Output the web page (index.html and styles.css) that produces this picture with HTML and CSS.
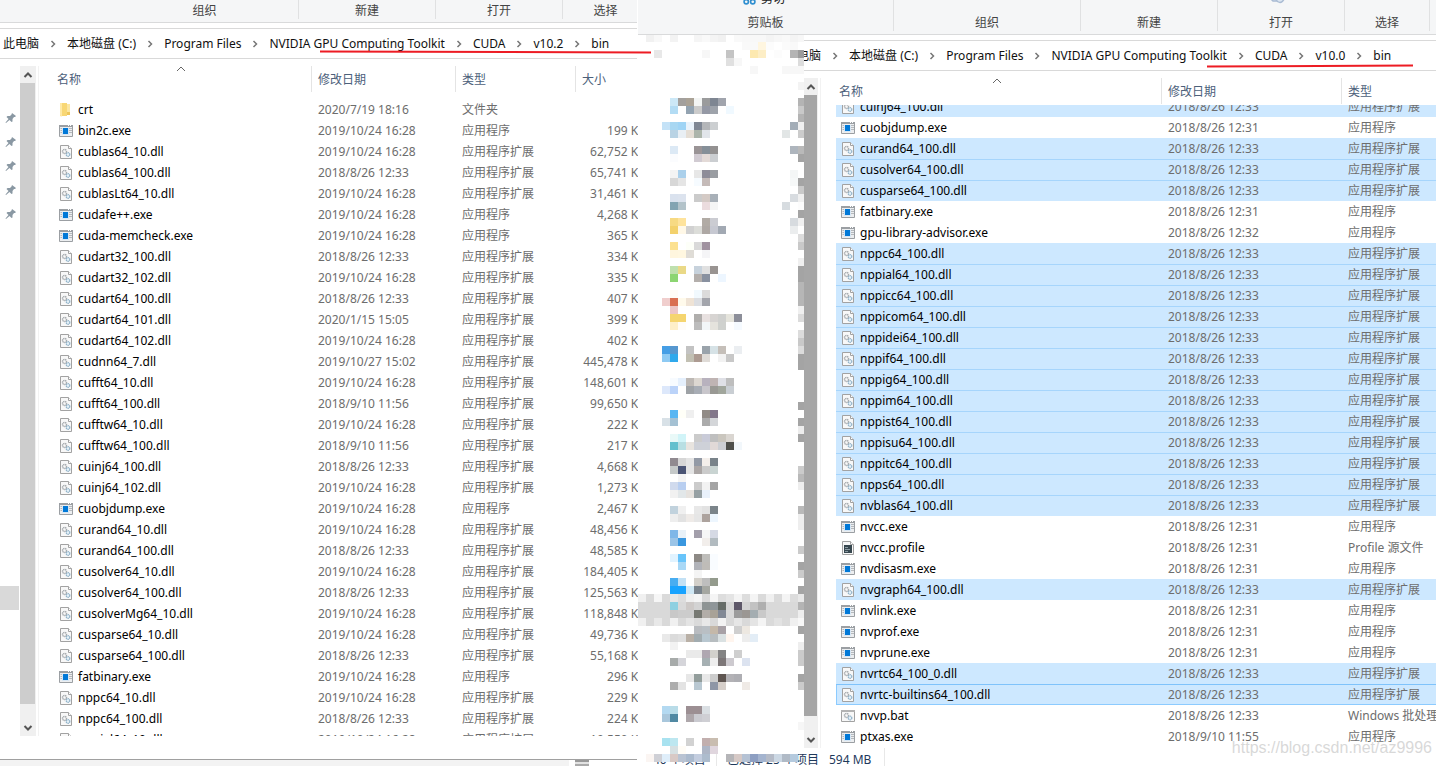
FILE: index.html
```html
<!DOCTYPE html>
<html lang="zh-CN">
<head>
<meta charset="utf-8">
<title>bin</title>
<link rel="stylesheet" href="styles.css">
</head>
<body>
<svg class="sprite" aria-hidden="true">
  <symbol id="i-folder" viewBox="0 0 16 16"><path d="M2 1h7v13H2z" fill="#f8d775"/><path d="M9 2h3v11H9z" fill="#fbe6a2"/><path d="M2 1h2v13l-1 1-1-2z" fill="#ffe9a6"/><path d="M9 10h3v3H9z" fill="#eec65c"/></symbol>
  <symbol id="i-exe" viewBox="0 0 16 16"><path d="M1.500 2.500h13v11h-13z" fill="#eceef0" stroke="#9b9fa3"/><path d="M1 2h14v2H1z" fill="#9b9fa3"/><path d="M10 2h1v1h-1zM12 2h1v1h-1z" fill="#fff"/><path d="M2.500 5.500h3M2.500 7.500h3M2.500 9.500h3M11 5.500h3M11 7.500h3M11 9.500h3" stroke="#b5b9bd"/><path d="M4 5h7v7H4z" fill="#d5e6f5"/><path d="M5 5h5v6H5z" fill="#0078d7"/></symbol>
  <symbol id="i-dll" viewBox="0 0 16 16"><path d="M2.500 1.500h8l3 3v10h-11z" fill="#f8f8f8" stroke="#a2a2a2"/><path d="M10.500 1.500v3h3" fill="#fff" stroke="#a2a2a2"/><circle cx="6.500" cy="7.500" r="2" fill="none" stroke="#a5a9ad" stroke-width="1.500" stroke-dasharray="1.300 .5"/><circle cx="10" cy="10.500" r="1.800" fill="#e6f1f8" stroke="#93b4ca" stroke-width="1.300" stroke-dasharray="1.300 .5"/></symbol>
  <symbol id="i-bat" viewBox="0 0 16 16"><path d="M1.500 2.500h13v11h-13z" fill="#f8f8f8" stroke="#a2a2a2"/><path d="M1 2h14v2H1z" fill="#b3b3b3"/><circle cx="6.500" cy="7.500" r="2" fill="none" stroke="#a5a9ad" stroke-width="1.500" stroke-dasharray="1.300 .5"/><circle cx="10" cy="10" r="1.800" fill="#e6f1f8" stroke="#93b4ca" stroke-width="1.300" stroke-dasharray="1.300 .5"/></symbol>
  <symbol id="i-profile" viewBox="0 0 16 16"><path d="M2.500 1.500h8l3 3v10h-11z" fill="#f8f8f8" stroke="#a2a2a2"/><path d="M10.500 1.500v3h3" fill="#fff" stroke="#a2a2a2"/><path d="M4 5h8v8H4z" fill="#37474f"/><path d="M5 7.500h3M5 9.500h5M5 11.500h3" stroke="#9fb0b8" stroke-width=".8"/></symbol>
  <symbol id="i-pin" viewBox="0 0 12 12"><path d="M7 1l4 3-1 1-1 0-1.500 2v2.500l-1 .5-2-2L1 11l-.5-.5L3.500 7l-2-2 1-1h2.500L6.500 2.500z" fill="#8a98a3"/></symbol>
  <symbol id="i-next" viewBox="0 0 6 8"><path d="M1.500 1l3 3-3 3" fill="none" stroke="#777" stroke-width="1.500"/></symbol>
  <symbol id="i-up" viewBox="0 0 10 8"><path d="M1.500 6L5 2.500 8.500 6" fill="none" stroke="#555" stroke-width="2"/></symbol>
  <symbol id="i-down" viewBox="0 0 10 8"><path d="M1.500 2L5 5.500 8.500 2" fill="none" stroke="#555" stroke-width="2"/></symbol>
  <symbol id="i-sort" viewBox="0 0 10 6"><path d="M1 5l4-4 4 4" fill="none" stroke="#666"/></symbol>
</svg>
<main class="desktop">
  <section class="window window-left" aria-label="v10.2">
    <header class="ribbon">
      <div class="group g-clip"></div>
      <div class="group g-org">组织</div>
      <div class="group g-new">新建</div>
      <div class="group g-open">打开</div>
      <div class="group g-select">选择</div>
    </header>
    <nav class="address" data-path="此电脑|本地磁盘 (C:)|Program Files|NVIDIA GPU Computing Toolkit|CUDA|v10.2|bin"></nav>
    <svg class="mark" viewBox="0 0 332 4" aria-hidden="true"><path d="M0 1.500L331 2.500" stroke="#ed1c24" stroke-width="2"/></svg>
    <div class="body">
      <aside class="nav">
        <svg class="pin"><use href="#i-pin"/></svg>
        <svg class="pin"><use href="#i-pin"/></svg>
        <svg class="pin"><use href="#i-pin"/></svg>
        <svg class="pin"><use href="#i-pin"/></svg>
        <svg class="pin"><use href="#i-pin"/></svg>
        <div class="nav-current"></div>
      </aside>
      <div class="scrollbar">
        <button type="button" class="sb-up" aria-label="向上"><svg><use href="#i-up"/></svg></button>
        <div class="thumb"></div>
        <button type="button" class="sb-down" aria-label="向下"><svg><use href="#i-down"/></svg></button>
      </div>
      <div class="files">
        <div class="heads">
          <button type="button" class="h-name">名称<svg class="sort"><use href="#i-sort"/></svg></button>
          <button type="button" class="h-date">修改日期</button>
          <button type="button" class="h-type">类型</button>
          <button type="button" class="h-size">大小</button>
        </div>
        <div class="view"><table id="left-files"></table></div>
      </div>
    </div>
    <footer class="hscroll"><div class="hthumb"></div><span class="grip"></span></footer>
  </section>

  <section class="window window-right" aria-label="v10.0">
    <header class="ribbon">
      <div class="group g-clip">剪贴板
        <span class="cut"><svg viewBox="0 0 12 12"><circle cx="3" cy="9" r="2" fill="none" stroke="#2f8fd0" stroke-width="1.500"/><circle cx="9" cy="9" r="2" fill="none" stroke="#2f8fd0" stroke-width="1.500"/><path d="M4 7.500L8 0M8 7.500L4 0" stroke="#4a6a85" stroke-width="1.500"/></svg>剪切</span>
      </div>
      <div class="group g-org">组织</div>
      <div class="group g-new">新建</div>
      <div class="group g-open">打开<svg class="history" viewBox="0 0 16 6"><path d="M1 0l2 2h4M6 0c1 4 6 5 8 0" fill="#dce6f2" stroke="#a9bbd3" stroke-width="1.500"/></svg></div>
      <div class="group g-select">选择</div>
      <div class="group g-rest"></div>
    </header>
    <nav class="address" data-path="此电脑|本地磁盘 (C:)|Program Files|NVIDIA GPU Computing Toolkit|CUDA|v10.0|bin"></nav>
    <svg class="mark" viewBox="0 0 206 4" aria-hidden="true"><path d="M0 2.500L206 1.500" stroke="#ed1c24" stroke-width="2"/></svg>
    <div class="body">
      <aside class="nav"></aside>
      <div class="scrollbar">
        <button type="button" class="sb-up" aria-label="向上"><svg><use href="#i-up"/></svg></button>
        <div class="thumb"></div>
        <button type="button" class="sb-down" aria-label="向下"><svg><use href="#i-down"/></svg></button>
      </div>
      <div class="files">
        <div class="heads">
          <button type="button" class="h-name">名称<svg class="sort"><use href="#i-sort"/></svg></button>
          <button type="button" class="h-date">修改日期</button>
          <button type="button" class="h-type">类型</button>
        </div>
        <div class="view"><table id="right-files"></table></div>
      </div>
    </div>
    <footer class="status"><span class="total">40 个项目</span><span class="chosen">已选择 25 个项目</span><span class="bytes">594 MB</span></footer>
    <svg class="mosaic" id="mosaic" viewBox="0 1 166 727" aria-hidden="true"></svg>
    <div class="watermark">https://blog.csdn.net/az9996</div>
  </section>
</main>
<script src="app.js"></script>
</body>
</html>
```
FILE: styles.css
```css
* { box-sizing: border-box; }
body {
  margin: 0;
  background: #fff;
  color: #000;
  font: 12px/20px "Noto Sans", "Noto Sans CJK SC", sans-serif;
}
button {
  border: 0;
  padding: 0;
  background: none;
  font: inherit;
  color: inherit;
  text-align: left;
}
.sprite { position: absolute; width: 0; height: 0; }
.desktop {
  display: grid;
  grid-template-columns: 638fr 802fr;
  height: 100vh;
  overflow: hidden;
}
.window {
  position: relative;
  display: flex;
  flex-direction: column;
  min-width: 0;
  min-height: 0;
}
.window-left { z-index: 1; }
.window-right { padding-right: 4px; }

/* ribbon */
.ribbon {
  display: flex;
  overflow: hidden;
  background: #f5f6f7;
  border-bottom: 1px solid #d9dadb;
  color: #444;
  line-height: 16px;
}
.window-left .ribbon { height: 23px; padding-bottom: 3px; margin-right: 1px; }
.window-right .ribbon { height: 35px; padding-bottom: 3px; }
.group {
  position: relative;
  flex: none;
  display: flex;
  justify-content: center;
  align-items: flex-end;
  border-right: 1px solid #e0e1e2;
}
.window-left .g-clip { width: 111px; border-right: 0; }
.window-left .g-org { width: 188px; }
.window-right .g-clip { width: 256px; }
.window-right .g-org { width: 187px; }
.g-new { width: 137px; }
.g-open { width: 127px; }
.g-select { width: 85px; }
.window-left .g-select, .g-rest { border-right: 0; }
.cut {
  position: absolute;
  left: 105px;
  top: -9px;
  display: flex;
  align-items: flex-end;
  gap: 5px;
  color: #222;
}
.cut svg { width: 13px; height: 13px; margin-bottom: 2px; }
.history { position: absolute; top: -1px; left: 52px; width: 16px; height: 6px; }

/* address */
.address {
  display: flex;
  align-items: center;
  flex: none;
  height: 31px;
  margin-top: 5px;
  padding-left: 3px;
  border-top: 1px solid #d9d9d9;
  border-bottom: 1px solid #d9d9d9;
  line-height: 18px;
  white-space: nowrap;
}
.window-left .address { margin-right: 1px; }
.window-right .address { padding-left: 147px; }
.address a { color: #111; text-decoration: none; }
.address svg { width: 6px; height: 8px; margin: 0 11px; flex: none; }
.mark { position: absolute; height: 4px; }
.window-left .mark { left: 320px; top: 50px; width: 332px; }
.window-right .mark { left: 569px; top: 64px; width: 206px; }

/* body */
.body { display: flex; flex: 1; min-height: 0; padding-top: 7px; }
.nav { flex: none; }
.window-left .nav { width: 20px; padding-top: 46px; }
.window-right .nav { width: 166px; }
.pin { display: block; width: 12px; height: 12px; margin: 0 0 12px 5px; }
.nav-current { width: 19px; height: 24px; margin-top: 366px; background: #d9d9d9; }
.scrollbar {
  display: flex;
  flex-direction: column;
  flex: none;
  background: #f0f0f0;
}
.window-left .scrollbar { width: 16px; padding-right: 1px; }
.window-right .scrollbar { width: 14px; padding-right: 1px; }
.scrollbar button { display: flex; align-items: center; justify-content: center; }
.scrollbar svg { width: 10px; height: 8px; }
.sb-up { height: 17px; }
.sb-down { height: 17px; }
.thumb { flex: 1; margin-bottom: 15px; background: #cdcdcd; }
.window-right .thumb { background: #a6a6a6; }
.files {
  display: flex;
  flex-direction: column;
  flex: 1;
  min-width: 0;
  margin-left: 2px;
  border-left: 1px solid #f2f2f2;
  overflow: hidden;
}
.heads { display: flex; flex: none; height: 26px; color: #4c607a; }
.heads button { position: relative; flex: none; padding: 2px 0 0 6px; border-right: 1px solid #e4e4e4; }
.heads .h-size, .window-right .heads .h-type { border-right: 0; }
.sort { position: absolute; left: 50%; top: 0; width: 10px; height: 6px; margin-left: -5px; }
.window-left .heads { padding-left: 12px; }
.window-left .h-name { width: 261px; }
.window-left .h-date { width: 144px; }
.window-left .h-type { width: 120px; }
.window-right .heads { padding-left: 12px; }
.window-right .h-name { width: 329px; }
.window-right .h-date { width: 180px; }
.view { flex: 1; min-height: 0; overflow: hidden; }
.window-left .view { padding: 7px 0 0 19px; }
.window-right .view { margin-top: 1px; padding-left: 15px; }
.window-right table { margin-top: -9px; }
table { border-collapse: collapse; table-layout: fixed; }
.window-left table { width: 588px; }
.window-right table { width: 640px; }
td { height: 21px; padding: 0; color: #6d6d6d; white-space: nowrap; }
td.name { color: #000; }
.name div { display: flex; align-items: center; gap: 4px; }
.name svg { width: 16px; height: 16px; flex: none; }
.window-left .name { width: 260px; }
.window-left .date { width: 144px; }
.window-left .type { width: 120px; }
.size { text-align: right; }
.window-right .name { width: 332px; }
.window-right .name div { padding-left: 4px; }
.window-right .date { width: 180px; }
tr.on { background: #cde8ff; }
tr.on + tr.on { box-shadow: inset 0 1px #a6d5fc; }
tr.on + tr.on.focus { box-shadow: inset 0 1px #7fc3fb, inset 1px -1px #8ccbff; }

/* footers */
.hscroll {
  display: flex;
  height: 7px;
  flex: none;
  margin: 23px 1px 0 0;
  border-top: 1px solid #a0a0a0;
}
.hthumb { width: 569px; background: #f3f3f3; }
.grip { width: 14px; height: 6px; margin-left: 6px; border-top: 2px solid #999; border-bottom: 2px solid #aaa; background: #e2e2e2; }
.status {
  display: flex;
  flex: none;
  height: 18px;
  padding-left: 15px;
  color: #1e395b;
  line-height: 24px;
  white-space: nowrap;
}
.total { width: 64px; border-right: 1px solid #e8e8e8; }
.chosen { width: 112px; padding-left: 10px; }
.bytes { width: 56px; border-right: 1px solid #e8e8e8; }
.mosaic { position: absolute; left: 0; top: 35px; width: 166px; height: 727px; }
.watermark {
  position: absolute;
  right: 8px;
  bottom: 8px;
  font: 16px/20px "Liberation Sans", sans-serif;
  color: rgba(190, 190, 190, .6);
}
```
FILE: app.js
```js
const svgIcon = id => `<svg aria-hidden="true"><use href="#i-${id}"/></svg>`;

document.querySelectorAll('.address').forEach(nav => {
  nav.innerHTML = nav.dataset.path.split('|').map(p => `<a href="#">${p}</a>`).join(svgIcon('next'));
});

const TYPES = { folder: '文件夹', exe: '应用程序', dll: '应用程序扩展', profile: 'Profile 源文件', bat: 'Windows 批处理文件' };
const A = '2019/10/24 16:28', B = '2018/8/26 12:33', C = '2018/8/26 12:31';

const left = [
  ['crt', '2020/7/19 18:16', ''], ['bin2c.exe', A, '199'], ['cublas64_10.dll', A, '62,752'],
  ['cublas64_100.dll', B, '65,741'], ['cublasLt64_10.dll', A, '31,461'], ['cudafe++.exe', A, '4,268'],
  ['cuda-memcheck.exe', A, '365'], ['cudart32_100.dll', B, '334'], ['cudart32_102.dll', A, '335'],
  ['cudart64_100.dll', B, '407'], ['cudart64_101.dll', '2020/1/15 15:05', '399'], ['cudart64_102.dll', A, '402'],
  ['cudnn64_7.dll', '2019/10/27 15:02', '445,478'], ['cufft64_10.dll', A, '148,601'],
  ['cufft64_100.dll', '2018/9/10 11:56', '99,650'], ['cufftw64_10.dll', A, '222'],
  ['cufftw64_100.dll', '2018/9/10 11:56', '217'], ['cuinj64_100.dll', B, '4,668'], ['cuinj64_102.dll', A, '1,273'],
  ['cuobjdump.exe', A, '2,467'], ['curand64_10.dll', A, '48,456'], ['curand64_100.dll', B, '48,585'],
  ['cusolver64_10.dll', A, '184,405'], ['cusolver64_100.dll', B, '125,563'], ['cusolverMg64_10.dll', A, '118,848'],
  ['cusparse64_10.dll', A, '49,736'], ['cusparse64_100.dll', B, '55,168'], ['fatbinary.exe', A, '296'],
  ['nppc64_10.dll', A, '229'], ['nppc64_100.dll', B, '224'], ['nppial64_10.dll', A, '10,550']
];
const right = [
  ['cuinj64_100.dll', B, 1], ['cuobjdump.exe', C], ['curand64_100.dll', B, 1], ['cusolver64_100.dll', B, 1],
  ['cusparse64_100.dll', B, 1], ['fatbinary.exe', C], ['gpu-library-advisor.exe', '2018/8/26 12:32'],
  ['nppc64_100.dll', B, 1], ['nppial64_100.dll', B, 1], ['nppicc64_100.dll', B, 1], ['nppicom64_100.dll', B, 1],
  ['nppidei64_100.dll', B, 1], ['nppif64_100.dll', B, 1], ['nppig64_100.dll', B, 1], ['nppim64_100.dll', B, 1],
  ['nppist64_100.dll', B, 1], ['nppisu64_100.dll', B, 1], ['nppitc64_100.dll', B, 1], ['npps64_100.dll', B, 1],
  ['nvblas64_100.dll', B, 1], ['nvcc.exe', C], ['nvcc.profile', C], ['nvdisasm.exe', C], ['nvgraph64_100.dll', B, 1],
  ['nvlink.exe', C], ['nvprof.exe', C], ['nvprune.exe', C], ['nvrtc64_100_0.dll', B, 1],
  ['nvrtc-builtins64_100.dll', B, 2], ['nvvp.bat', B], ['ptxas.exe', '2018/9/10 11:55']
];

function cells(name, date) {
  const kind = name.includes('.') ? name.split('.').pop() : 'folder';
  return `<td class="name"><div>${svgIcon(kind)}${name}</div></td><td class="date">${date}</td><td class="type">${TYPES[kind]}</td>`;
}
document.getElementById('left-files').innerHTML = left
  .map(([n, d, s]) => `<tr>${cells(n, d)}<td class="size">${s ? s + ' KB' : ''}</td></tr>`).join('');
document.getElementById('right-files').innerHTML = right
  .map(([n, d, s]) => `<tr class="${['', 'on', 'on focus'][s || 0]}">${cells(n, d)}</tr>`).join('');

/* Pixelated navigation pane: "row: column=colour ...", 8px cells, two digits mean a grey. */
const PIXELS = `
0: 1=f1 2=f8 4=f3 7=f5 8=f9 9=f4 10=f1 12=f9 13=f8 14=f8 15=f8 16=f4 17=f7 18=f9 19=f4 20=f7
1: 13=f9 14=f9 15=fff6e0 16=fc 18=fb 19=f9
2: 2=e8 8=f7 11=c4 14=fde9b0 15=fdeec6 17=fc 19=b4 20=9c
3: 11=e0 12=f7 20=dc
4: 14=f7 18=f7 19=f7 20=f7
6: 20=f3
8: 4=cce8f7 5=a3a09d 6=aaa296 7=f3f5f4 8=9a9b9c 9=7e8692 10=a0a4ad 20=b4
9: 4=b3dcf4 6=93a3b1 7=cb 8=9599a5 9=9ea3ab 11=f0f9ff 20=c9
10: 20=b4
11: 3=c4e2f7 4=a8d7f2 5=9fd4f5 6=eaf3fb 7=7f8794 8=b4b6b9 9=cccfd1 19=a3adb7 20=f0
12: 4=b9d3e4 5=e9eff4 6=e5ded5 7=acb5ab 8=e1e5ea 18=e2e6e6 20=cc
14: 4=dce9f5 7=9a9496 8=858f98 9=939191 19=aeb5bd 20=b9
15: 4=fbfcfe 7=d1cbd2 8=e3dad7 9=cbced1 20=a4
17: 4=f3 5=abd0eb 7=e7 8=8e8c98 9=9a9da2 19=f4f6f6
18: 4=d7 5=e5 7=f6fbff 8=c4bab8 19=f6f8f8 20=a4
19: 20=c9
20: 4=dae2ee 5=dce3ee 7=cb 8=d4cac5 9=a8b0b8 19=d8dce0 20=f0
21: 4=83a4b2 5=b3c3ca 8=ebdcde 9=f5 18=d7dce0 20=fc
22: 20=a4
23: 4=f7da83 5=fee39c 8=b1aba5 9=cbccd2 19=d7dbdf 20=f0
24: 4=f3d16c 5=fff8e7 6=d1 7=dcddd9 8=aea8a4 9=c6c8d1 10=a2a9b3 19=ebedee
25: 20=dc
26: 4=fce190 6=fdfff8 7=d9 8=a092a0 20=c9
27: 4=fff6de 5=fff7e0 6=dfdcd6 8=f5f5f7
28: 20=f0
29: 4=bfe0ae 5=ead987 7=c7d2dc 8=e0 9=999492 20=a4
30: 4=8cd572 7=b4afac 8=8991a0 10=edf6ff 20=a4
31: 20=b6
32: 4=fffcf6 7=f1f9fe 8=db 20=b6
33: 3=f0cecd 4=d96f50 5=fffaeb 6=efe3d5 7=dcdee2 8=a3a5ac 20=b6
34: 4=edc6c5 20=f0
35: 4=f5d56f 5=f5d56f 7=b0aeac 8=e8e1e0 9=d7d4d2 10=cfd0ce 11=e5e4dc 12=8c8e99 20=dc
36: 4=feefc9 5=fffcf8 7=bc 8=f2f6f8 9=e5e3dd 10=cfd1ce 12=f5faff
37: 20=dc
38: 20=c9
39: 3=459ee5 4=5697cf 6=c3 8=9aa3ab 9=d6e2e6 10=c5bfb9 12=ebeef1 20=dc
40: 3=8ecaf3 4=30a9ec 6=c2c0b3 7=ad9b92 8=dfdbd7 10=f2 11=c8 20=a4
41: 20=a4
43: 4=f7fbff 5=e5f0fd 6=bdb8b4 7=dcd7d1 8=b8b2be 9=bfb4b3 10=dfe0e6 11=be
44: 3=dde8fb 4=bbd3f9 6=9ea2a6 7=a8adb5 8=c8c6cb 9=999994 10=a1a69c 11=c9ced3
46: 20=a4
47: 4=58b6f2 5=fffff8 6=ef 8=918b86 9=82778a
48: 3=d8e1e7 4=a4c1d3 8=ab 9=d4d6d9 20=a4
49: 20=ed
50: 4=e9f9f8 5=d1f4f8 7=cb 8=c9cbd8 9=bf 10=cac6be 11=dad6d1 20=a4
51: 4=63c0ce 5=b8dfe3 6=e8e4df 7=ced1d8 8=ced1d8 9=e1d9d7 10=cdcfd4 11=4e4f4b 12=f2f7fb
53: 4=908a90 5=d6 6=e4 7=9299a5 8=f4efeb 9=79838a
54: 4=c5c9c9 5=4b5575 6=e4 7=aba6a5 8=cb 9=c9d4d2 20=cb
55: 5=f4 20=b9
56: 4=d0daed 5=b8cef0 7=cb 8=f2 9=a4 20=ee
57: 4=f1 5=e2e7e9 6=e6e2de 7=96a0a3 8=e9f1fb
59: 4=c1d2dd 5=f0 7=e8 8=e2 9=7b848a 20=b9
60: 4=ee 5=e2 6=efebe8 7=e6 8=ada39e 9=edf6fe 20=ee
61: 20=ee
62: 4=7eb7e8 5=e8f1f8 7=a39fab 8=f6 9=d5d9e4
63: 4=9ac4e7 5=3a97df 8=f2eeeb 9=b2bbc0
64: 20=cb
65: 4=e1f3ff 5=68c4fa 7=8d8985 8=bebdba 9=f9fcff
66: 5=a9d8f6 7=b1b3b9 8=bfbcb8 9=f9fcff 20=a4
67: 7=f4 20=cb
68: 4=48adf1 5=c3e1f5 7=d3d0ca 8=be 9=949b8d
69: 4=18a3ff 5=18a3ff 6=cfe7f4 7=79838c 8=a5a7a1 20=a4
70: 0=f0 1=da 2=f6 3=da 4=e7 5=dd 6=f0 7=f5 8=da 9=f5 10=dd 11=e4 12=f4 13=dd 14=f4 15=da 16=f0 17=da 18=f4 19=dc 20=e8
71: 0=d9 1=d9 2=d9 3=d9 4=8ed0e1 5=d9 6=cdc9c7 7=d3 8=8e9494 9=8f9699 10=666c68 11=d5 12=5d5768 13=d3 14=c2 15=af 16=d9 17=d9 18=d9 19=d9 20=b4
72: 0=d9 1=d9 2=d9 3=d9 4=c8 5=cc 6=cc 7=777973 8=b2ada8 9=a8a297 10=828995 11=d9 12=9c 13=9b9793 14=a4adb1 15=c9 16=d9 17=d9 18=d9 19=d9 20=ee
73: 0=f0 1=d9 2=e8 3=d9 4=f0 5=d9 6=e4 7=da 8=e8 9=d9 10=f3 11=d9 12=e6 13=d9 14=e4 15=f4 16=da 17=e2 18=da 19=f0 20=f8
74: 7=b9bcc0 8=b9bfc4 9=c4b8a9 10=a8a1a6 12=cf 13=ede8e1 20=a4
75: 3=e9 4=db 5=df 6=b9b0a6 7=a2acb0 8=b8c7d0 9=b7bdc0 10=dae1e2 11=fff5ee 13=ed 14=e3edf6
76: 4=f2 20=ee
77: 6=ea 7=ea 8=afa7b1 9=d2d1cc 10=84 12=cf 20=cb
78: 4=a7abaa 5=d5d5da 8=a6b0b3 9=ee 10=7c7677 11=cdcacf 13=dce3f0 20=cb
80: 6=e7 7=929d9b 8=e8 9=cc 10=5e5551 11=b3b2b6 12=aeaeb3 20=a4
81: 4=ad 5=e3 7=b9c8d2 9=8e96a6 10=d6cfca 13=efeae6 20=cb
84: 3=b3d9f1 4=b9dce8 6=9c8f93 7=9c8f93 8=dadfe3
85: 3=a9c7dc 4=5189a3 6=aea7ab 7=cacad0 8=cfcfd4
86: 20=f6
88: 3=a8e2f0 4=bde7f0 6=d2 8=c2afae 9=c9bdb0
89: 4=d6e0e2 5=fffcf6 8=aeb6c6 9=e0d6de
90: 1=fbf5f2 2=cfd0d6 3=dfeefa 4=d8c9c5 5=b9c3d2 6=abbacd 7=c3cddf 8=adbccd 11=b5b5b8 12=d6c9c6 13=b5c2d4 14=8d9fc2 15=a4b4cf 16=b5bbc7 17=ccd8e4 18=b0bac6 19=b5cade`;

document.getElementById('mosaic').innerHTML = '<path d="M0 0h166v720H0z" fill="#fff"/>' +
  PIXELS.trim().split('\n').map(line => {
    const [row, list] = line.split(': ');
    return list.split(' ').map(item => {
      const [col, c] = item.split('=');
      return `<path d="M${col * 8} ${row * 8}h8v8h-8z" fill="#${c.length === 2 ? c + c + c : c}" shape-rendering="crispEdges"/>`;
    }).join('');
  }).join('');
```
